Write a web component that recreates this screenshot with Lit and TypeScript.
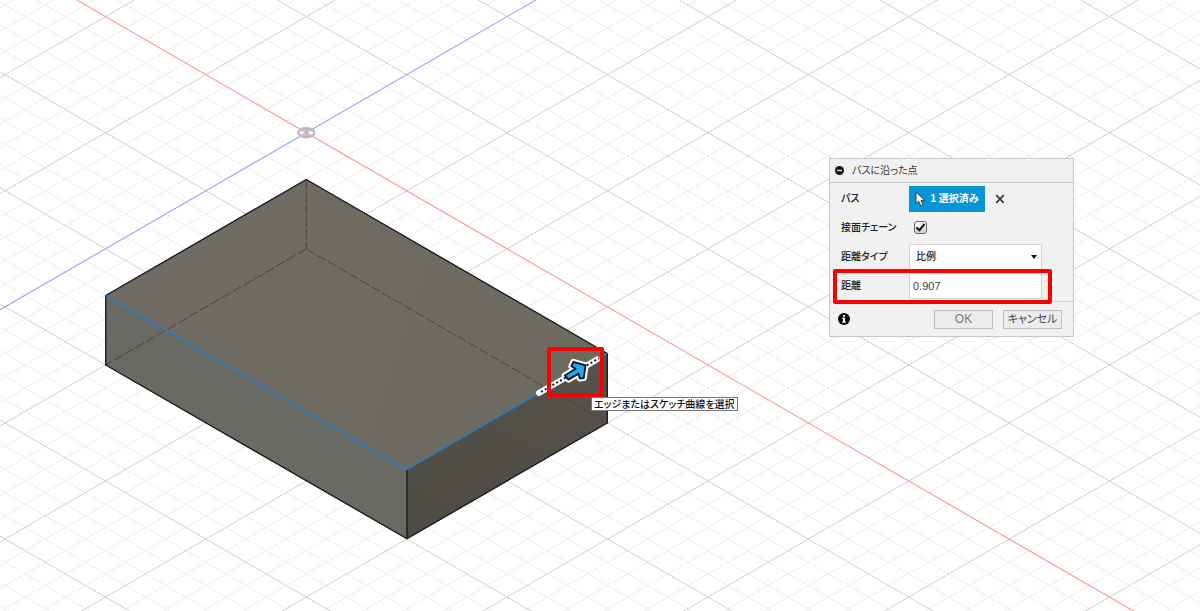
import { LitElement, html, svg, css } from "lit";
import { customElement, state } from "lit/decorators.js";

// Isometric ground grid: origin and one major step along each axis.
const ORIGIN = { x: 306.3, y: 132.7 };
const STEP = { x: 100.4, y: 58.05 };
const DIVISIONS = 5;
const REACH = 30;

// Manipulator arrow lying along the selected edge.
const ARROW =
  "M564.8 375.4L575.6 368.8L571.4 366.2L573.4 361.8L585.6 365.4L583.8 378L579.6 378.5L578.6 373.6L568.400 379.600Z";

@customElement("model-canvas")
export class ModelCanvas extends LitElement {
  static styles = css`
    :host {
      display: block;
      width: 100%;
      height: 100%;
    }
    .scene {
      display: block;
      width: 100%;
      height: 100%;
    }
    .minor {
      stroke: #ededed;
      stroke-width: 1;
    }
    .major {
      stroke: #cfcfcf;
      stroke-width: 1;
    }
    .axis-x {
      stroke: #ff9c9c;
      stroke-width: 1.2;
    }
    .axis-z {
      stroke: #a6a6ff;
      stroke-width: 1.2;
    }
    .origin {
      fill: none;
      stroke: #bdbdbd;
      stroke-width: 2.6;
    }
    .edge {
      fill: none;
      stroke: #161616;
      stroke-width: 1.3;
      stroke-linejoin: round;
    }
    .hidden-edge {
      fill: none;
      stroke: #47453d;
      stroke-width: 1;
      stroke-dasharray: 10 2.5;
    }
    .selected-edge {
      fill: none;
      stroke: #1481e0;
      stroke-width: 1.3;
    }
    .halo {
      fill: #fff;
      stroke: #fff;
      stroke-linecap: round;
      stroke-linejoin: round;
    }
    .dots {
      fill: none;
      stroke: #14202b;
      stroke-width: 2;
      stroke-dasharray: 2 2.4;
    }
    .arrow {
      fill: #22a7f2;
      stroke: #0b141c;
      stroke-width: 1.8;
      stroke-linejoin: round;
    }
    .frame {
      fill: none;
      stroke: #fb0000;
      stroke-width: 4;
      stroke-linejoin: round;
    }
  `;

  private gridLine(index: number, direction: 1 | -1, name: string) {
    const x = ORIGIN.x + (index * STEP.x) / DIVISIONS;
    const y = ORIGIN.y - (direction * index * STEP.y) / DIVISIONS;
    return svg`<line class=${name}
      x1=${x - REACH * STEP.x} y1=${y - direction * REACH * STEP.y}
      x2=${x + REACH * STEP.x} y2=${y + direction * REACH * STEP.y} />`;
  }

  private grid() {
    const minor = [];
    const major = [];
    for (let i = -60; i <= 120; i++) {
      for (const direction of [1, -1] as const) {
        if (i === 0) continue;
        if (i % DIVISIONS === 0) major.push(this.gridLine(i, direction, "major"));
        else minor.push(this.gridLine(i, direction, "minor"));
      }
    }
    return [minor, major];
  }

  render() {
    return html`
      <svg class="scene" aria-hidden="true">
        <defs>
          <linearGradient id="top" x1="0" y1="0.4" x2="1" y2="0.6">
            <stop offset="0" stop-color="#706b66" />
            <stop offset="0.55" stop-color="#6f6b60" />
            <stop offset="1" stop-color="#6c695e" />
          </linearGradient>
          <linearGradient id="right" x1="0.8" y1="0" x2="0.2" y2="1">
            <stop offset="0" stop-color="#55524b" />
            <stop offset="1" stop-color="#4f4c45" />
          </linearGradient>
          <filter id="soft" x="-50%" y="-50%" width="200%" height="200%">
            <feGaussianBlur stdDeviation="0.7" />
          </filter>
        </defs>
        ${this.grid()}
        ${this.gridLine(0, 1, "axis-x")} ${this.gridLine(0, -1, "axis-z")}
        <ellipse class="origin" cx="306.3" cy="132.7" rx="8" ry="4.4" />
        <path d="M306.3 132.7l-3.600-3.900h7.200zM306.3 132.7l-3.600 3.900h7.200z" fill="#aaa" opacity="0.7" />

        <path d="M306.3 179.5L607.3 353.5L407 469.5L105.7 295.5Z" fill="url(#top)" />
        <path d="M105.7 295.5L407 469.5V538.7L105.7 365Z" fill="#696a64" />
        <path d="M407 469.5L607.3 353.5V423L407 538.7Z" fill="url(#right)" />
        <path class="hidden-edge" d="M306.3 179.5V249M306.3 249L105.7 365M306.3 249L607.3 423" />
        <path class="edge" d="M105.7 295.5L306.3 179.5L607.3 353.5V423L407 538.7L105.7 365Z" />
        <path class="edge" d="M407 469.5V538.7" />
        <path class="selected-edge" d="M105.7 295.5L407 469.5L607.3 353.5" />

        <path class="halo" stroke-width="6" filter="url(#soft)" d="M539 393L597 359.500" />
        <path class="halo" stroke-width="6" filter="url(#soft)" d=${ARROW} />
        <path class="dots" d="M541 391.800L599 358.300" />
        <path class="arrow" d=${ARROW} />
        <rect class="frame" x="549" y="349" width="53" height="46" />
      </svg>
    `;
  }
}

@customElement("point-dialog")
export class PointDialog extends LitElement {
  @state() private distance = "0.907";

  static styles = css`
    :host {
      display: block;
      box-sizing: border-box;
      width: 245px;
      border: 1px solid #c6c6c6;
      background: #f1f1f1;
      color: #222;
      font: 400 10px/16px "Liberation Sans", "Noto Sans CJK JP", sans-serif;
      font-feature-settings: "palt";
    }
    header {
      display: flex;
      align-items: center;
      gap: 8px;
      height: 23px;
      padding: 0 5px;
      border-bottom: 1px solid #c6c6c6;
    }
    h1 {
      margin: 0;
      font-size: 10px;
      font-weight: 400;
      color: #333;
    }
    button {
      margin: 0;
      padding: 0;
      border: 0;
      background: none;
      font: inherit;
      font-feature-settings: inherit;
      color: inherit;
    }
    label {
      font-weight: 500;
    }
    svg {
      display: block;
    }
    .body {
      display: grid;
      grid-template-columns: 68px 1fr;
      grid-auto-rows: 29px;
      align-items: center;
      padding: 1px 31px 1px 11px;
    }
    .path {
      display: flex;
      align-items: center;
      gap: 10px;
    }
    .pick {
      display: flex;
      align-items: center;
      justify-content: center;
      gap: 4px;
      width: 76px;
      height: 26px;
      background: #0696d7;
      color: #fff;
      font-weight: 700;
    }
    .check {
      appearance: none;
      display: grid;
      place-items: center;
      box-sizing: border-box;
      width: 13px;
      height: 13px;
      margin: 0 0 0 5px;
      border: 1px solid #666;
      border-radius: 3px;
      background: linear-gradient(#fdfdfd, #cfcfcf);
    }
    .check:checked::before {
      content: "";
      width: 3px;
      height: 7px;
      margin-top: -2px;
      border: solid #111;
      border-width: 0 2px 2px 0;
      transform: rotate(40deg);
    }
    .choice {
      display: grid;
      align-items: center;
    }
    .choice > * {
      grid-area: 1 / 1;
    }
    .choice svg {
      justify-self: end;
      margin-right: 5px;
      pointer-events: none;
    }
    select,
    .value {
      appearance: none;
      box-sizing: border-box;
      width: 100%;
      height: 26px;
      margin: 0;
      padding: 0 6px;
      border: 1px solid #d4d4d4;
      border-radius: 0;
      background: #fff;
      color: #222;
      font: inherit;
      font-weight: 500;
    }
    .value {
      padding: 0 3px;
      font-size: 11px;
      font-weight: 400;
      color: #444;
    }
    footer {
      display: flex;
      align-items: center;
      gap: 10px;
      height: 34px;
      padding: 0 11px 0 8px;
      border-top: 1px solid #d0d0d0;
    }
    .info {
      margin-right: auto;
    }
    .action {
      box-sizing: border-box;
      width: 59px;
      height: 19px;
      border: 1px solid #bdbdbd;
      background: #ececec;
      color: #444;
      font-size: 11px;
      line-height: 17px;
    }
    .muted {
      color: #777;
      font-size: 12px;
    }
  `;

  private onDistance(event: Event) {
    this.distance = (event.target as HTMLInputElement).value;
  }

  render() {
    return html`
      <header>
        <button aria-label="折りたたむ">
          <svg width="9" height="9" viewBox="0 0 9 9">
            <circle cx="4.5" cy="4.5" r="4.5" fill="#161616" />
            <rect x="2" y="3.800" width="5" height="1.400" fill="#ddd" />
          </svg>
        </button>
        <h1>パスに沿った点</h1>
      </header>
      <div class="body">
        <label for="path">パス</label>
        <div class="path">
          <button class="pick" id="path">
            <svg width="11" height="16" viewBox="0 0 11 16">
              <path d="M1 1V12.500L3.700 10.200L5.800 15L8 14L6 9.400H9.700Z" fill="#f4f4f4" stroke="#444" stroke-width="1" />
            </svg>
            <span>1 選択済み</span>
          </button>
          <button aria-label="選択を解除">
            <svg width="10" height="10" viewBox="0 0 10 10">
              <path d="M1.200 1.200L8.800 8.800M8.800 1.200L1.200 8.800" stroke="#3c3c3c" stroke-width="1.700" />
            </svg>
          </button>
        </div>
        <label for="chain">接面チェーン</label>
        <input class="check" id="chain" type="checkbox" checked />
        <label for="type">距離タイプ</label>
        <div class="choice">
          <select id="type">
            <option>比例</option>
          </select>
          <svg width="6" height="4" viewBox="0 0 6 4"><path d="M0 0H6L3 4Z" fill="#111" /></svg>
        </div>
        <label for="distance">距離</label>
        <input class="value" id="distance" .value=${this.distance} @input=${this.onDistance} />
      </div>
      <footer>
        <button class="info" aria-label="情報">
          <svg width="12" height="12" viewBox="0 0 12 12">
            <circle cx="6" cy="6" r="6" fill="#0c0c0c" />
            <path d="M5 2H7V3.700H5zM4.300 4.800H7V8.500H7.800V9.700H4.300V8.500H5V6H4.300z" fill="#fff" />
          </svg>
        </button>
        <button class="action muted">OK</button>
        <button class="action">キャンセル</button>
      </footer>
    `;
  }
}

@customElement("app-root")
export class AppRoot extends LitElement {
  static styles = css`
    :host {
      display: block;
      position: relative;
      height: 100vh;
      overflow: hidden;
      background: #fff;
    }
    .dialog {
      position: absolute;
      top: 158px;
      left: 829px;
    }
    .highlight {
      position: absolute;
      top: 269px;
      left: 833px;
      box-sizing: border-box;
      width: 219px;
      height: 35px;
      border: 4px solid #fb0000;
      border-radius: 2px;
      pointer-events: none;
    }
    .tooltip {
      position: absolute;
      top: 397px;
      left: 591px;
      padding: 0 2px;
      border: 1px solid #777;
      background: #fff;
      color: #111;
      font: 500 10px/12px "Noto Sans CJK JP", sans-serif;
      font-feature-settings: "palt";
      white-space: nowrap;
    }
  `;

  render() {
    return html`
      <model-canvas></model-canvas>
      <point-dialog class="dialog"></point-dialog>
      <div class="highlight"></div>
      <div class="tooltip" role="tooltip">エッジまたはスケッチ曲線を選択</div>
    `;
  }
}
